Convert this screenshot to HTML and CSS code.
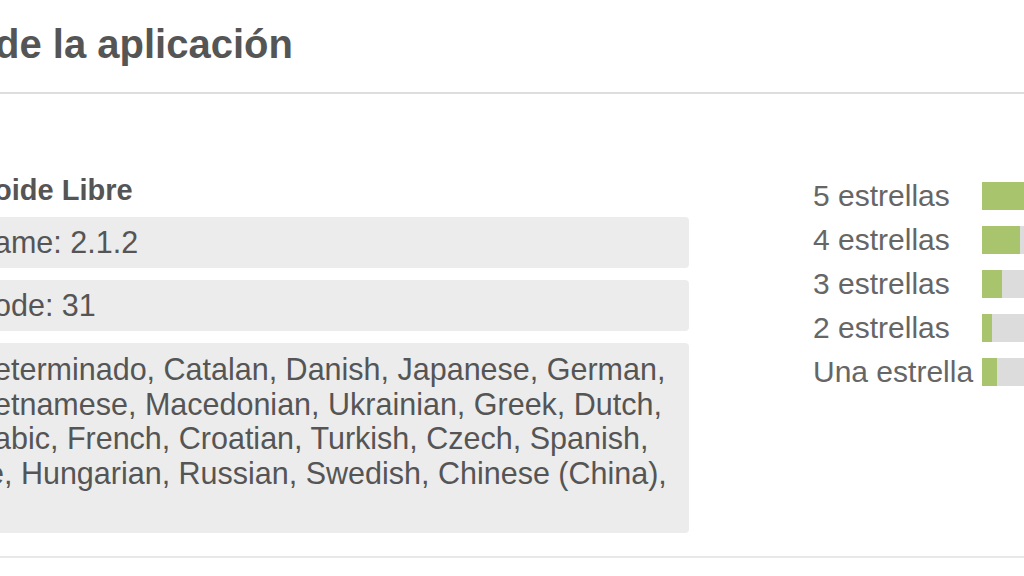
FILE: index.html
```html
<!DOCTYPE html>
<html lang="es">
<head>
  <meta charset="UTF-8">
  <meta name="viewport" content="width=device-width, initial-scale=1.0">
  <title>Detalles de la aplicación</title>
  <link rel="stylesheet" href="styles.css">
</head>
<body>
  <div class="page">
    <div class="header">
      <h1 class="title">de la aplicación</h1>
    </div>

    <div class="content">
      <div class="info">
        <div class="developer">oide Libre</div>
        <div class="field">ame: 2.1.2</div>
        <div class="field">ode: 31</div>
        <div class="field field-long">
          eterminado, Catalan, Danish, Japanese, German,<br>
          etnamese, Macedonian, Ukrainian, Greek, Dutch,<br>
          abic, French, Croatian, Turkish, Czech, Spanish,<br>
          <span class="shift">e, Hungarian, Russian, Swedish, Chinese (China),</span>
        </div>
      </div>

      <div class="ratings">
        <div class="rating-row">
          <span class="rating-label">5 estrellas</span>
          <div class="bar"><div class="bar-fill" style="width: 100%;"></div></div>
        </div>
        <div class="rating-row">
          <span class="rating-label">4 estrellas</span>
          <div class="bar"><div class="bar-fill" style="width: 38px;"></div></div>
        </div>
        <div class="rating-row">
          <span class="rating-label">3 estrellas</span>
          <div class="bar"><div class="bar-fill" style="width: 20px;"></div></div>
        </div>
        <div class="rating-row">
          <span class="rating-label">2 estrellas</span>
          <div class="bar"><div class="bar-fill" style="width: 10px;"></div></div>
        </div>
        <div class="rating-row">
          <span class="rating-label">Una estrella</span>
          <div class="bar"><div class="bar-fill" style="width: 15px;"></div></div>
        </div>
      </div>
    </div>
  </div>
</body>
</html>
```

FILE: styles.css
```css
body {
  margin: 0;
  background: #fff;
  color: #555;
  font-family: 'Liberation Sans', Arial, sans-serif;
  overflow: hidden;
  width: 1024px;
  height: 576px;
}
.page {
  width: 1024px;
}
.header {
  padding: 21px 0 25px;
  border-bottom: 2px solid #dedede;
}
.title {
  margin: 0 0 0 -5px;
  font-size: 40px;
  line-height: 46px;
  font-weight: bold;
  color: #555;
  white-space: nowrap;
}
.content {
  display: flex;
  padding-top: 80px;
  padding-bottom: 23px;
  border-bottom: 2px solid #e8e8e8;
}
.info {
  width: 695px;
  margin-left: -6px;
  flex-shrink: 0;
}
.developer {
  font-size: 29px;
  line-height: 32px;
  font-weight: bold;
  color: #555;
  margin-bottom: 11px;
  white-space: nowrap;
}
.field {
  background: #ececec;
  border-radius: 4px;
  font-size: 30.5px;
  line-height: 51px;
  height: 51px;
  margin-bottom: 12px;
  white-space: nowrap;
}
.field-long {
  height: auto;
  min-height: 181px;
  line-height: 34.5px;
  padding-top: 9px;
  margin-bottom: 0;
}
.shift {
  margin-left: -7px;
}
.ratings {
  margin-left: 124px;
  flex-shrink: 0;
}
.rating-row {
  display: flex;
  align-items: center;
  height: 44px;
}
.rating-label {
  width: 169px;
  font-size: 30px;
  color: #666;
  white-space: nowrap;
}
.bar {
  width: 160px;
  height: 28px;
  background: #dcdcdc;
}
.bar-fill {
  height: 100%;
  background: #a8c46c;
}
```
